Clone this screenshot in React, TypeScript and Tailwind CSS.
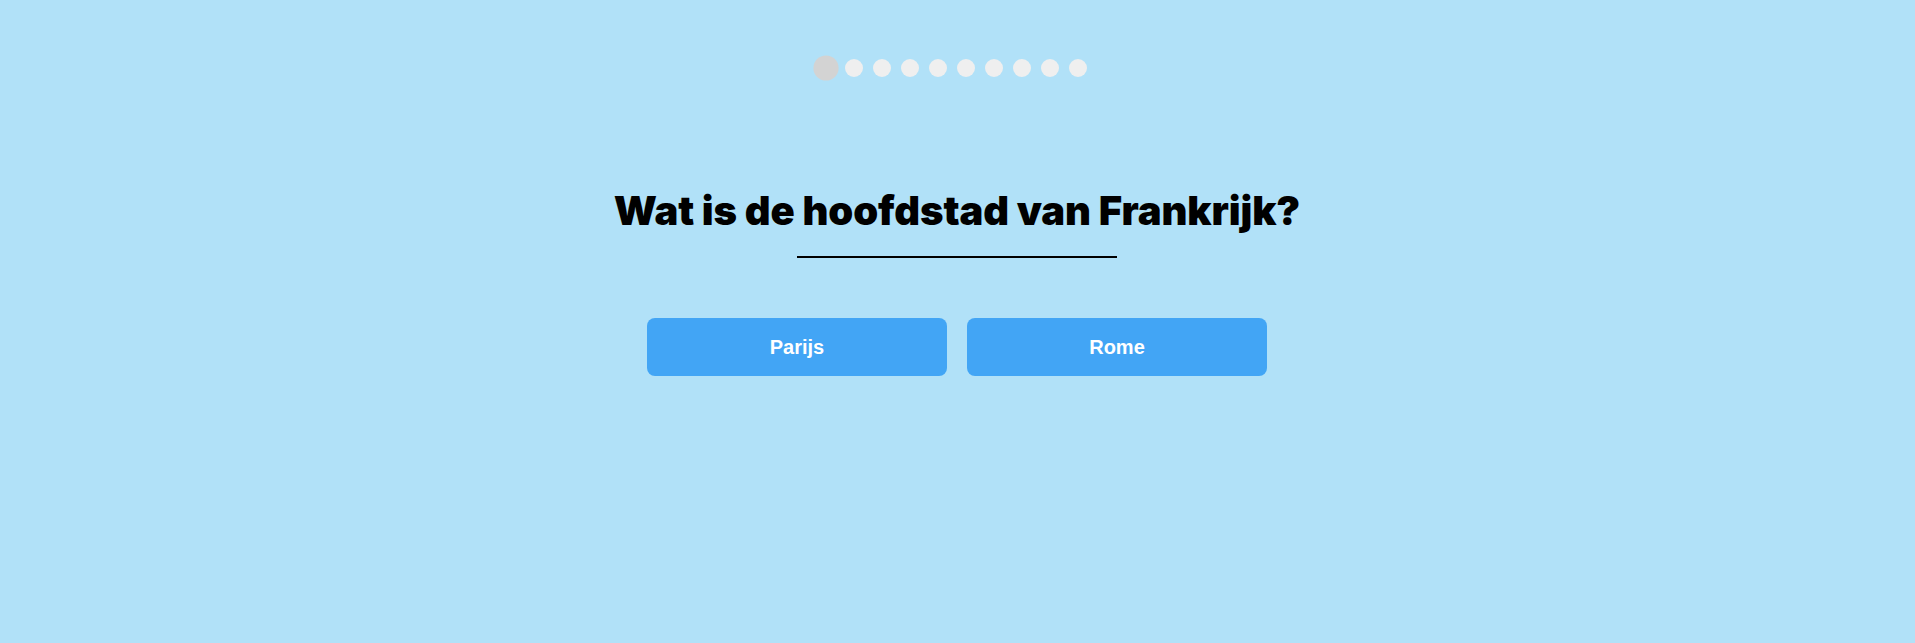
const DOTS = 10;
const ANSWERS = ["Parijs", "Rome"];

export default function App() {
  const current = 0;

  return (
    <div className="min-h-[643px] w-full bg-[#b1e1f8] flex flex-col items-center pt-[59px] pr-[1px]">
      <div className="flex">
        {Array.from({ length: DOTS }).map((_, i) => (
          <span
            key={i}
            className={
              i === current
                ? "block w-[18px] h-[18px] mr-[10px] rounded-full bg-[#d3d3d3] scale-[1.4]"
                : "block w-[18px] h-[18px] mr-[10px] rounded-full bg-[#efefef]"
            }
          />
        ))}
      </div>

      <h1 className="mt-[110px] text-[40px] leading-[48px] font-black tracking-[-0.12px] text-black font-['Inter',sans-serif]">
        Wat is de hoofdstad van Frankrijk?
      </h1>
      <div className="mt-[21px] w-[320px] h-[2px] bg-black" />

      <div className="mt-[60px] flex gap-[20px]">
        {ANSWERS.map((a) => (
          <button
            key={a}
            className="w-[300px] h-[58px] rounded-lg bg-[#42a5f5] text-white text-[20px] font-bold font-['Liberation_Sans',Arial,sans-serif]"
          >
            {a}
          </button>
        ))}
      </div>
    </div>
  );
}
